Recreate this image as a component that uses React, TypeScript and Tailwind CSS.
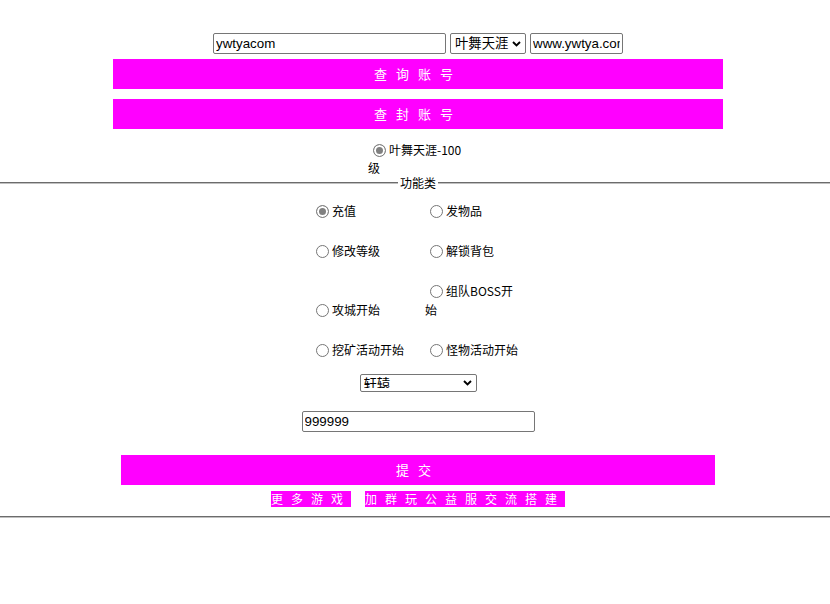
import React from "react";

const radioCls =
  "appearance-none inline-block align-[-2px] ml-[5px] mr-[3px] w-[13px] h-[13px] rounded-full border border-[#767676] bg-white checked:border-[#808080] checked:bg-[#808080] checked:shadow-[inset_0_0_0_2px_#ffffff]";

function Chevron() {
  return (
    <svg
      className="pointer-events-none absolute right-[5px] top-1/2 -translate-y-1/2"
      width="9"
      height="6"
      viewBox="0 0 9 6"
    >
      <path d="M1 1l3.5 3.5L8 1" stroke="#000" strokeWidth="1.9" fill="none" />
    </svg>
  );
}

const items: { label: string; checked?: boolean }[] = [
  { label: "充值", checked: true },
  { label: "发物品" },
  { label: "修改等级" },
  { label: "解锁背包" },
  { label: "攻城开始" },
  { label: "组队BOSS开始" },
  { label: "挖矿活动开始" },
  { label: "怪物活动开始" },
];

export default function App() {
  return (
    <div className="w-[830px] min-h-[604px] bg-white pt-[33px] text-black font-['Noto_Sans_CJK_SC',sans-serif]">
      <div className="flex justify-center gap-[4px] pl-[6px] font-['Liberation_Sans','Noto_Sans_CJK_SC',sans-serif] text-[13.33px]">
        <input
          className="block h-[21px] w-[233px] rounded-[2px] border border-[#767676] px-[2px] leading-[17px] outline-none"
          defaultValue="ywtyacom"
        />
        <div className="relative h-[21px] w-[76px]">
          <select className="block h-full w-full appearance-none rounded-[2px] border border-[#767676] bg-white pl-[4px] outline-none">
            <option>叶舞天涯</option>
          </select>
          <Chevron />
        </div>
        <input
          className="block h-[21px] w-[93px] rounded-[2px] border border-[#767676] px-[2px] leading-[17px] outline-none"
          defaultValue="www.ywtya.com"
        />
      </div>

      <div className="pl-[6px]">
        <button className="mx-auto mt-[5px] block h-[30px] w-[610px] bg-[#ff00ff] text-[13px] tracking-[9px] text-white">
          查询账号
        </button>
        <button className="mx-auto mt-[10px] block h-[30px] w-[610px] bg-[#ff00ff] text-[13px] tracking-[9px] text-white">
          查封账号
        </button>
      </div>

      <div className="mt-[12px] flex justify-center pl-[6px]">
        <label className="block w-[100px] text-[12px] leading-[18px]">
          <input type="radio" name="srv" defaultChecked className={radioCls} />
          叶舞天涯-100级
        </label>
      </div>

      <fieldset className="m-0 border-x-0 border-y-2 border-[#c0c0c0] [border-style:groove] pl-[6px] pb-[9px]">
        <legend className="mx-auto px-[2px] text-[12px] leading-[12px]">功能类</legend>

        <div className="mx-auto mt-[12px] grid w-[214px] grid-cols-[96px_96px] items-end gap-x-[18px] gap-y-[21px] text-[12px] leading-[19px]">
          {items.map((it) => (
            <label key={it.label} className="block">
              <input type="radio" name="fn" defaultChecked={it.checked} className={radioCls} />
              {it.label}
            </label>
          ))}
        </div>

        <div className="mt-[15px] flex justify-center">
          <div className="relative h-[18px] w-[117px]">
            <select className="block h-full w-full appearance-none rounded-[2px] border border-[#767676] bg-white pt-0 pb-[3px] pl-[3px] text-[13.33px] outline-none font-['Liberation_Sans','Noto_Sans_CJK_SC',sans-serif]">
              <option>轩辕</option>
            </select>
            <Chevron />
          </div>
        </div>

        <div className="mt-[19px] flex justify-center">
          <input
            className="block h-[21px] w-[233px] rounded-[2px] border border-[#767676] px-[2px] text-[13.33px] leading-[17px] outline-none font-['Liberation_Sans',sans-serif]"
            defaultValue="999999"
          />
        </div>

        <button className="mx-auto mt-[23px] block h-[30px] w-[594px] bg-[#ff00ff] text-[13px] tracking-[9px] text-white">
          提交
        </button>

        <div className="mt-[6px] flex justify-center gap-[14px] text-[12px] tracking-[8px] text-white">
          <a className="block h-[16px] bg-[#ff00ff] leading-[16px]">更多游戏</a>
          <a className="block h-[16px] bg-[#ff00ff] leading-[16px]">加群玩公益服交流搭建</a>
        </div>
      </fieldset>
    </div>
  );
}
